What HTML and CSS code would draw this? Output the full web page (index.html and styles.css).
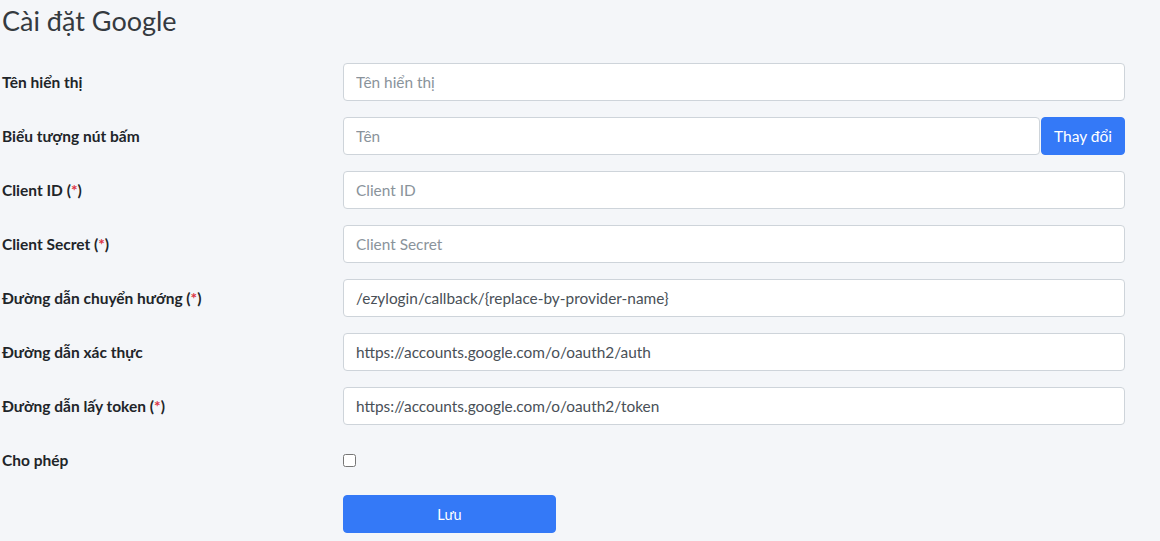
FILE: index.html
```html
<!DOCTYPE html>
<html lang="vi">
<head>
    <meta charset="UTF-8">
    <meta name="viewport" content="width=device-width, initial-scale=1.0">
    <title>Cài đặt Google</title>
    <link rel="stylesheet" href="styles.css">
</head>
<body>
    <div class="page">
        <h1 class="page-title">Cài đặt Google</h1>

        <form class="settings-form">
            <label class="form-label" for="displayName">Tên hiển thị</label>
            <div class="form-field">
                <input type="text" id="displayName" class="form-input" placeholder="Tên hiển thị">
            </div>

            <label class="form-label" for="buttonIcon">Biểu tượng nút bấm</label>
            <div class="form-field input-group">
                <input type="text" id="buttonIcon" class="form-input" placeholder="Tên">
                <button type="button" class="button button-append">Thay đổi</button>
            </div>

            <label class="form-label" for="clientId">Client ID (<span class="required">*</span>)</label>
            <div class="form-field">
                <input type="text" id="clientId" class="form-input" placeholder="Client ID">
            </div>

            <label class="form-label" for="clientSecret">Client Secret (<span class="required">*</span>)</label>
            <div class="form-field">
                <input type="text" id="clientSecret" class="form-input" placeholder="Client Secret">
            </div>

            <label class="form-label" for="redirectUrl">Đường dẫn chuyển hướng (<span class="required">*</span>)</label>
            <div class="form-field">
                <input type="text" id="redirectUrl" class="form-input" value="/ezylogin/callback/{replace-by-provider-name}">
            </div>

            <label class="form-label" for="authUrl">Đường dẫn xác thực</label>
            <div class="form-field">
                <input type="text" id="authUrl" class="form-input" value="https://accounts.google.com/o/oauth2/auth">
            </div>

            <label class="form-label" for="tokenUrl">Đường dẫn lấy token (<span class="required">*</span>)</label>
            <div class="form-field">
                <input type="text" id="tokenUrl" class="form-input" value="https://accounts.google.com/o/oauth2/token">
            </div>

            <label class="form-label" for="enabled">Cho phép</label>
            <div class="form-field check-field">
                <input type="checkbox" id="enabled" class="form-check">
            </div>

            <div></div>
            <div class="form-field">
                <button type="submit" class="button button-save">Lưu</button>
            </div>
        </form>
    </div>
</body>
</html>
```

FILE: styles.css
```css
body {
    font-family: Lato, "Noto Sans", sans-serif;
    margin: 0;
    padding: 0;
    background-color: #f4f6f9;
    color: #212529;
    overflow: hidden;
}
.page {
    padding: 4px 0 0 2px;
}
.page-title {
    font-size: 27px;
    font-weight: 400;
    color: #343a40;
    margin: 0 0 25px 0;
    line-height: 34px;
}
.settings-form {
    display: grid;
    grid-template-columns: 341px 782px;
    row-gap: 16px;
    align-items: center;
}
.form-label {
    font-size: 15.5px;
    font-weight: 700;
}
.required {
    color: #dc3545;
}
.form-field {
    display: flex;
    align-items: center;
}
.form-input {
    flex: 1;
    min-width: 0;
    height: 38px;
    box-sizing: border-box;
    padding: 6px 12px;
    font-family: inherit;
    font-size: 15.4px;
    color: #495057;
    background-color: #fff;
    border: 1px solid #ced4da;
    border-radius: 4px;
    outline: none;
}
.form-input::placeholder {
    color: #8a939b;
}
.input-group {
    gap: 1px;
}
.check-field {
    height: 38px;
}
.form-check {
    width: 13px;
    height: 13px;
    margin: 0;
}
.button {
    font-family: inherit;
    font-size: 15.5px;
    color: #fff;
    background-color: #3479f7;
    border: 1px solid #3479f7;
    border-radius: 4px;
    cursor: pointer;
}
.button-append {
    width: 84px;
    height: 38px;
    padding: 0;
}
.button-save {
    width: 213px;
    height: 38px;
    font-size: 14.5px;
}
```
